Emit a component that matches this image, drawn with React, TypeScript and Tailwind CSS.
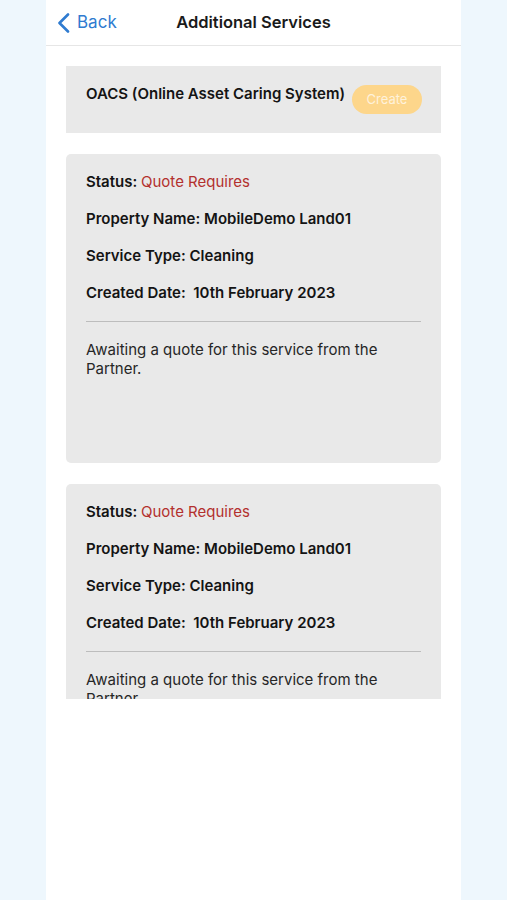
import React from "react";

const font = { fontFamily: "Inter, 'Noto Sans', sans-serif" };

function ServiceCard() {
  return (
    <div className="h-[309px] shrink-0 rounded-[5px] bg-[#e9e9e9] px-5 pt-[18px]">
      <div className="flex flex-col gap-[17px] text-[15px] leading-[20px] font-semibold text-[#141414]">
        <p>
          Status: <span className="font-normal text-[#b3302e]">Quote Requires</span>
        </p>
        <p>Property Name: MobileDemo Land01</p>
        <p>Service Type: Cleaning</p>
        <p>Created Date:&nbsp; 10th February 2023</p>
      </div>
      <div className="mt-[18px] h-px bg-[#bdbdbd]" />
      <p className="mt-[18px] pr-[40px] text-[15px] leading-[19px] text-[#262626]">
        Awaiting a quote for this service from the Partner.
      </p>
    </div>
  );
}

export default function App() {
  return (
    <div className="flex h-[900px] w-[507px] justify-center bg-[#eef7fd]" style={font}>
      <div className="flex w-[415px] flex-col bg-white">
        <header className="relative flex h-[46px] shrink-0 items-center border-b border-[#e6e6e6]">
          <button className="absolute left-[11px] flex items-center gap-[7px] text-[17px] text-[#2f7bd0]">
            <svg width="13" height="20" viewBox="0 0 13 20" fill="none">
              <path d="M11 1.5 L2.5 10 L11 18.5" stroke="#2f7bd0" strokeWidth="2.6" strokeLinecap="round" strokeLinejoin="round" />
            </svg>
            Back
          </button>
          <h1 className="w-full text-center text-[16.5px] font-semibold text-[#1a1a1a]">Additional Services</h1>
        </header>
        <div className="flex h-[653px] flex-col gap-[21px] overflow-hidden px-5 pt-5">
          <div className="flex h-[67px] shrink-0 items-center justify-between bg-[#e9e9e9] px-5">
            <p className="mb-[11px] text-[15px] font-semibold text-[#141414]">OACS (Online Asset Caring System)</p>
            <button className="mr-[-1px] h-[29px] w-[70px] rounded-full bg-[#fdd68b] text-[13px] text-white/70">Create</button>
          </div>
          <ServiceCard />
          <ServiceCard />
        </div>
      </div>
    </div>
  );
}
